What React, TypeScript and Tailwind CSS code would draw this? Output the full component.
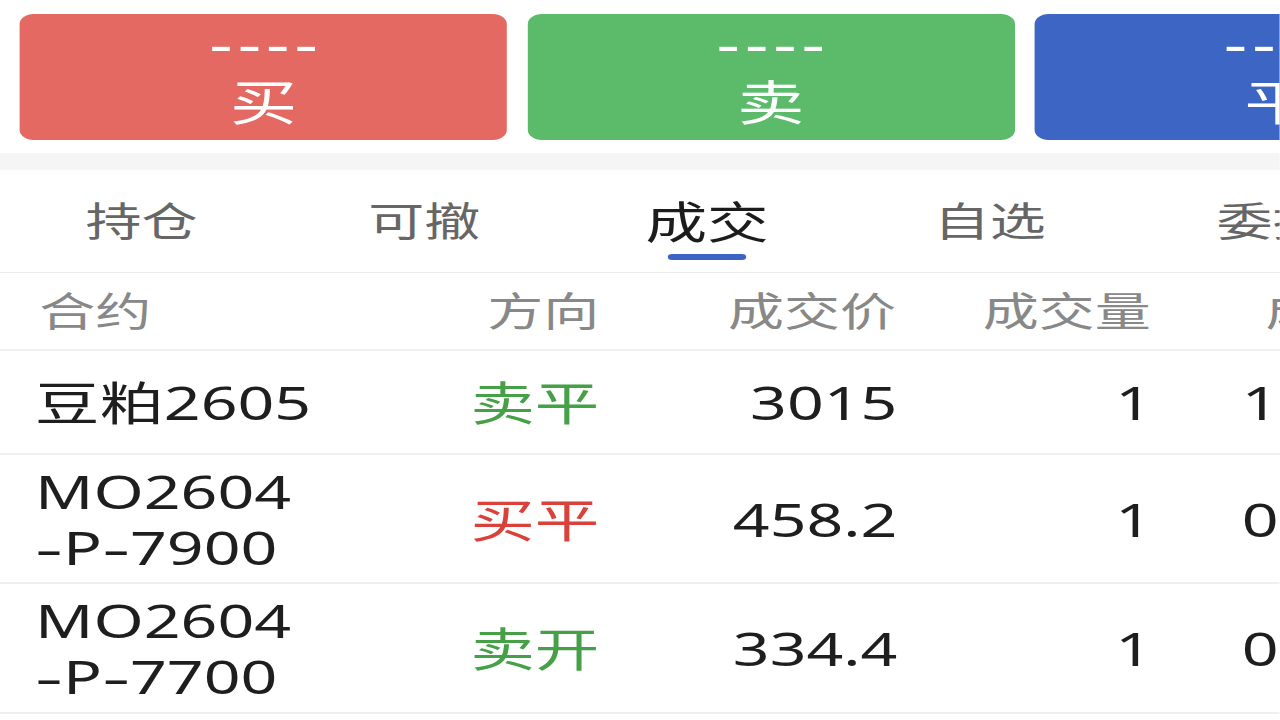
import React from "react";

const FONT = "'Noto Sans','Noto Sans CJK SC',sans-serif";

function TradeButton({ color, label }: { color: string; label: string }) {
  return (
    <div className={`w-[348px] h-[126px] shrink-0 rounded-[10px] ${color} flex flex-col items-center text-white`}>
      <div className="text-[52px] leading-[52px] tracking-[3.5px] h-[52px] mt-[3px] pl-[3.5px]">----</div>
      <div className="text-[48px] leading-[56px] mt-[5px]">{label}</div>
    </div>
  );
}

const tabs = ["持仓", "可撤", "成交", "自选", "委托"];

type Row = {
  name: string[];
  dir: string;
  dirColor: string;
  price: string;
  qty: string;
  time: string;
  h: string;
};

const rows: Row[] = [
  { name: ["豆粕2605"], dir: "卖平", dirColor: "text-[#46a047]", price: "3015", qty: "1", time: "14:58:21", h: "h-[102px]" },
  { name: ["MO2604", "-P-7900"], dir: "买平", dirColor: "text-[#d9413b]", price: "458.2", qty: "1", time: "09:41:07", h: "h-[127px]" },
  { name: ["MO2604", "-P-7700"], dir: "卖开", dirColor: "text-[#46a047]", price: "334.4", qty: "1", time: "09:32:55", h: "h-[128px]" },
];

function Name({ text }: { text: string }) {
  const parts = text.split(/(-)/);
  return (
    <span>
      {parts.map((p, i) =>
        p === "-" ? (
          <span key={i} className="inline-block w-[20px] text-center [transform:scaleX(1.35)]">-</span>
        ) : (
          <span key={i}>{p}</span>
        )
      )}
    </span>
  );
}

export default function App() {
  return (
    <div className="w-[1280px] h-[720px] overflow-hidden bg-white" style={{ fontFamily: FONT }}>
      <div className="w-[914.3px] origin-top-left [transform:scaleX(1.4)]">
        {/* action buttons */}
        <div className="h-[153px] pt-[14px] pl-[14.3px] flex gap-[14.3px] overflow-hidden">
          <TradeButton color="bg-[#e36962]" label="买" />
          <TradeButton color="bg-[#5bbb6b]" label="卖" />
          <TradeButton color="bg-[#3d65c4]" label="平" />
        </div>
        <div className="h-[17px] bg-[#f5f5f5]" />

        {/* tabs */}
        <div className="h-[102px] flex overflow-hidden border-b border-[#ececec] box-content">
          {tabs.map((t, i) => (
            <div key={t} className="w-[202px] shrink-0 relative flex items-center justify-center">
              <span
                className={`leading-none ${i === 2 ? "text-[44px] text-[#1c1c1c] mt-[1px]" : "text-[40px] text-[#666666]"}`}
              >
                {t}
              </span>
              {i === 2 && (
                <div className="absolute bottom-[12px] left-1/2 -translate-x-1/2 w-[56px] h-[6px] rounded-full bg-[#3d64c3]" />
              )}
            </div>
          ))}
        </div>

        {/* table header */}
        <div className="h-[76px] flex items-center border-b-2 border-[#f0f0f0] text-[40px] text-[#888888] whitespace-nowrap box-content">
          <div className="w-[300px] shrink-0 pl-[28px]">合约</div>
          <div className="w-[128px] shrink-0 text-right">方向</div>
          <div className="w-[212px] shrink-0 text-right">成交价</div>
          <div className="w-[182px] shrink-0 text-right">成交量</div>
          <div className="shrink-0 pl-[82px]">成交时间</div>
        </div>

        {/* rows */}
        {rows.map((r, idx) => (
          <div
            key={idx}
            className={`${r.h} flex items-center border-b-2 border-[#f0f0f0] text-[46px] leading-[56px] text-[#1e1e1e] whitespace-nowrap box-content`}
          >
            <div className="w-[300px] shrink-0 pl-[25px] flex flex-col">
              {r.name.map((n) => (
                <Name key={n} text={n} />
              ))}
            </div>
            <div className={`w-[128px] shrink-0 text-right ${r.dirColor}`}>{r.dir}</div>
            <div className="w-[213px] shrink-0 text-right">{r.price}</div>
            <div className="w-[182px] shrink-0 text-right">{r.qty}</div>
            <div className="shrink-0 pl-[64px]">{r.time}</div>
          </div>
        ))}
      </div>
    </div>
  );
}
